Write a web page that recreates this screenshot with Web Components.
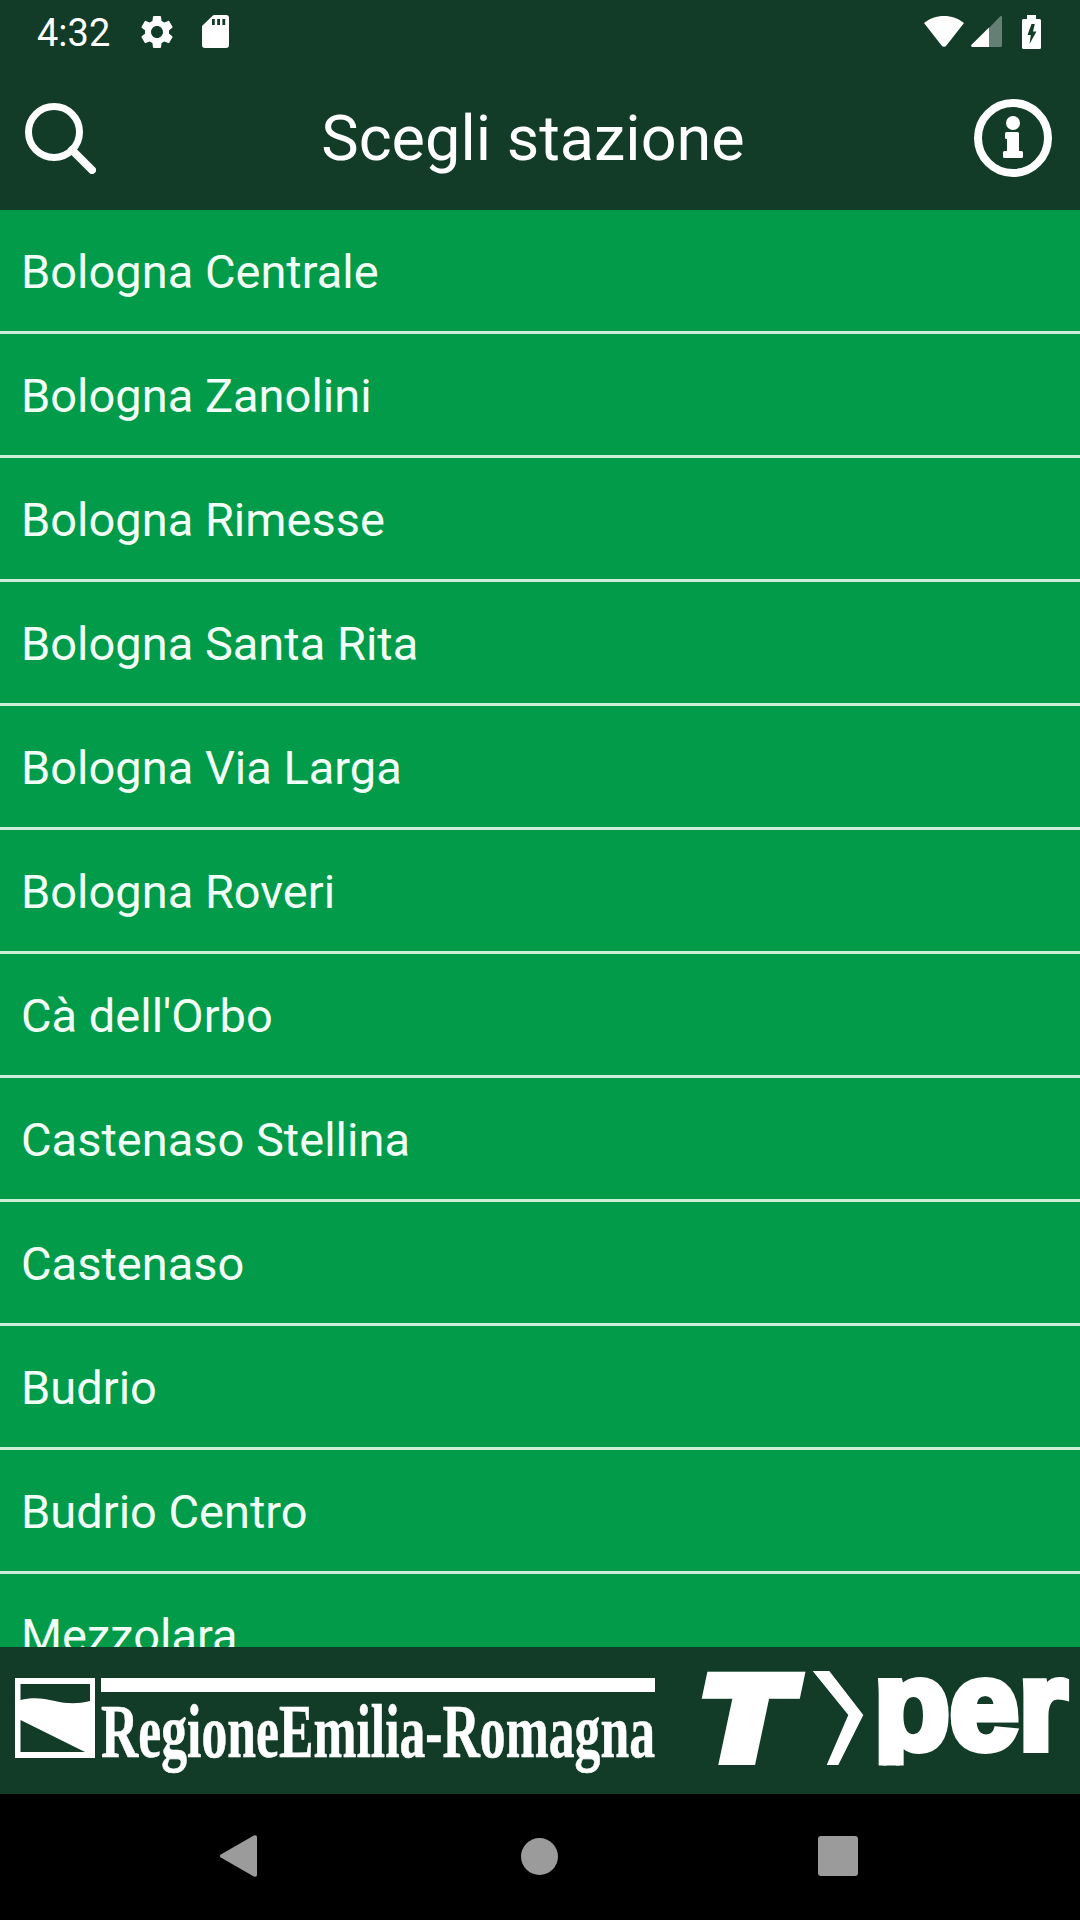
<!DOCTYPE html>
<html lang="it">
<head>
<meta charset="utf-8">
<title>Scegli stazione</title>
<style>
html,body{margin:0;padding:0;background:#000;}
body{font-family:Roboto,"Noto Sans",sans-serif;}
</style>
</head>
<body>
<app-shell>
  <status-bar slot="top"></status-bar>
  <app-toolbar slot="top" title="Scegli stazione"></app-toolbar>
  <station-list slot="main">
    <station-item>Bologna Centrale</station-item>
    <station-item>Bologna Zanolini</station-item>
    <station-item>Bologna Rimesse</station-item>
    <station-item>Bologna Santa Rita</station-item>
    <station-item>Bologna Via Larga</station-item>
    <station-item>Bologna Roveri</station-item>
    <station-item>Cà dell'Orbo</station-item>
    <station-item>Castenaso Stellina</station-item>
    <station-item>Castenaso</station-item>
    <station-item>Budrio</station-item>
    <station-item>Budrio Centro</station-item>
    <station-item>Mezzolara</station-item>
  </station-list>
  <logo-footer slot="bottom"></logo-footer>
  <nav-bar slot="bottom"></nav-bar>
</app-shell>
<script>
function def(name, html, init){
  customElements.define(name, class extends HTMLElement{
    constructor(){super();this.attachShadow({mode:'open'}).innerHTML=html;}
    connectedCallback(){if(init)init(this);}
  });
}
def('app-shell',`<style>
:host{display:flex;flex-direction:column;width:1080px;height:1920px;overflow:hidden;}
.top{display:block;background:#123b28;flex:none;}
.main{display:block;flex:1;min-height:0;overflow:hidden;}
.bottom{display:block;flex:none;}
</style>
<div class="top"><slot name="top"></slot></div>
<div class="main"><slot name="main"></slot></div>
<div class="bottom"><slot name="bottom"></slot></div>`);

def('status-bar',`<style>
:host{display:flex;align-items:center;box-sizing:border-box;height:66px;padding:0 39px 3px 37px;color:#fff;}
.time{font:400 38px/44px Roboto,sans-serif;width:71px;margin-right:29px;position:relative;top:1px;white-space:nowrap;}
svg{display:block;flex:none;}
.sd{margin-left:25px;}
.wifi{margin-left:auto;}
.sig{margin-left:7px;}
.bat{margin-left:20px;}
</style>
<span class="time">4:32</span>
<svg width="40" height="40" viewBox="0 0 24 24" fill="#fff"><path d="M19.14 12.94c.04-.3.06-.61.06-.94 0-.32-.02-.64-.07-.94l2.03-1.58c.18-.14.23-.41.12-.61l-1.92-3.32c-.12-.22-.37-.29-.59-.22l-2.39.96c-.5-.38-1.03-.7-1.62-.94l-.36-2.54c-.04-.24-.24-.41-.48-.41h-3.84c-.24 0-.43.17-.47.41l-.36 2.54c-.59.24-1.13.57-1.62.94l-2.39-.96c-.22-.08-.47 0-.59.22L2.74 8.87c-.12.21-.08.47.12.61l2.03 1.58c-.05.3-.09.63-.09.94s.02.64.07.94l-2.03 1.58c-.18.14-.23.41-.12.61l1.92 3.32c.12.22.37.29.59.22l2.39-.96c.5.38 1.03.7 1.62.94l.36 2.54c.05.24.24.41.48.41h3.84c.24 0 .44-.17.47-.41l.36-2.54c.59-.24 1.13-.56 1.62-.94l2.39.96c.22.08.47 0 .59-.22l1.92-3.32c.12-.22.07-.47-.12-.61l-2.01-1.58zM12 15.6c-1.98 0-3.6-1.62-3.6-3.6s1.62-3.6 3.6-3.6 3.6 1.62 3.6 3.6-1.62 3.6-3.6 3.6z"/></svg>
<svg class="sd" width="27" height="33" viewBox="0 0 27 33"><path fill="#fff" fill-rule="evenodd" d="M12 0H24a3 3 0 0 1 3 3V30a3 3 0 0 1-3 3H3a3 3 0 0 1-3-3V11.5a1.5 1.5 0 0 1 .5-1.1L10.9.5A1.5 1.5 0 0 1 12 0ZM10 4h2.8v6H10ZM15.2 4h2.8v6h-2.8ZM20.4 4h2.8v6h-2.8Z"/></svg>
<svg class="wifi" width="40" height="31" viewBox="0 0 40 31"><path fill="#fff" d="M20 0C12.500 0 5.600 2.500 0 7L17.800 29.800a2.800 2.800 0 0 0 4.400 0L40 7C34.400 2.500 27.500 0 20 0Z"/></svg>
<svg class="sig" width="31" height="31" viewBox="0 0 31 31"><path fill="#fff" fill-opacity=".35" d="M31 1.500V29.500a1.500 1.500 0 0 1-1.500 1.500H18V12L29 .5C30 -.4 31 .2 31 1.500Z"/><path fill="#fff" d="M18 11.500V31H1.500C.2 31-.4 29.800 .5 28.800Z"/></svg>
<svg class="bat" width="19" height="34" viewBox="0 0 19 34"><path fill="#fff" fill-rule="evenodd" d="M5 0H14V4H17.500A1.500 1.500 0 0 1 19 5.500V32.500A1.500 1.500 0 0 1 17.500 34H1.500A1.500 1.500 0 0 1 0 32.500V5.500A1.500 1.500 0 0 1 1.500 4H5ZM9.500 9L5.500 20H8.800L7.500 29L14.500 16.500H11L12.800 9Z"/></svg>`);

def('app-toolbar',`<style>
:host{display:flex;align-items:center;box-sizing:border-box;height:144px;padding:0 28px 0 25px;color:#fff;}
svg{display:block;flex:none;}
.title{flex:1;text-align:center;font:400 63px/72px Roboto,sans-serif;padding:2px 4px 0 0;}
</style>
<svg width="71" height="71" viewBox="0 0 71 71" fill="none" stroke="#fff"><circle cx="29" cy="29" r="25.500" stroke-width="7"/><path d="M47 47 L67 67" stroke-width="8" stroke-linecap="round"/></svg>
<div class="title"></div>
<svg width="78" height="78" viewBox="0 0 78 78"><circle cx="39" cy="39" r="35" fill="none" stroke="#fff" stroke-width="8"/><circle cx="39" cy="24" r="7" fill="#fff"/><path fill="#fff" d="M31 34.500a1.500 1.500 0 0 1 1.500-1.500H43.500a1.500 1.500 0 0 1 1.500 1.500V52H47.500a1.500 1.500 0 0 1 1.500 1.500V57.500a1.500 1.500 0 0 1-1.500 1.500H30.500a1.500 1.500 0 0 1-1.500-1.500V53.500a1.500 1.500 0 0 1 1.500-1.500H33V40H32.500a1.500 1.500 0 0 1-1.500-1.500Z"/></svg>`,
el=>{el.shadowRoot.querySelector('.title').textContent=el.getAttribute('title');});

def('station-list',`<style>
:host{display:block;background:#019b4a;height:100%;overflow:hidden;}
</style><slot></slot>`);

def('station-item',`<style>
:host{display:flex;align-items:center;box-sizing:border-box;height:124px;padding:3px 0 0 21px;border-bottom:3px solid #cdeed6;color:#f2fff6;font:400 47px/56px Roboto,sans-serif;white-space:nowrap;}
</style><slot></slot>`);

def('logo-footer',`<style>
:host{display:block;height:147px;background:#123b28;}
svg{display:block;}
</style>
<svg width="1080" height="147" viewBox="0 1647 1080 147">
<defs><clipPath id="perclip"><rect x="860" y="1660" width="215" height="105.500"/></clipPath></defs>
<path fill="#fff" fill-rule="evenodd" d="M15 1678H95V1758H15ZM20.500 1684V1700C32 1697 43 1698 55 1701C67 1704 78 1704 90 1701V1684ZM20.500 1720V1752H85Z"/>
<rect x="101" y="1678" width="554" height="14" fill="#fff"/>
<text x="101" y="1757" font-family="'Liberation Serif',serif" font-weight="700" font-size="77" textLength="554" lengthAdjust="spacingAndGlyphs" fill="#fff" stroke="#fff" stroke-width=".6">RegioneEmilia-Romagna</text>
<text transform="translate(696 1758) skewX(-12) scale(1.2 1)" x="0" y="0" font-family="'Liberation Sans',sans-serif" font-weight="700" font-size="115" fill="#fff" stroke="#fff" stroke-width="14">T</text>
<polygon fill="#fff" points="812.700,1671 829.300,1671 863.300,1715 838.300,1765 826.700,1765 848.300,1715"/>
<g clip-path="url(#perclip)"><text x="874" y="1749" font-family="'Liberation Sans',sans-serif" font-weight="700" font-size="126" textLength="193" lengthAdjust="spacingAndGlyphs" fill="#fff" stroke="#fff" stroke-width="8">per</text></g>
</svg>`);

def('nav-bar',`<style>
:host{display:flex;align-items:center;box-sizing:border-box;height:126px;padding:0 0 2px 220px;background:#000;}
svg{display:block;flex:none;}
.c{margin-left:263.500px;}
.s{margin-left:260.500px;}
</style>
<svg width="37" height="42" viewBox="0 0 37 42"><path fill="#9b9b9b" d="M.8 19.400 33.800.6C35.400-.3 37 .4 37 2.200V39.800C37 41.600 35.400 42.300 33.800 41.400L.8 22.600C-.3 21.800-.3 20.200.8 19.400Z"/></svg>
<svg class="c" width="37" height="37" viewBox="0 0 37 37"><circle cx="18.500" cy="18.500" r="18.500" fill="#9b9b9b"/></svg>
<svg class="s" width="40" height="40" viewBox="0 0 40 40"><rect width="40" height="40" rx="3" fill="#9b9b9b"/></svg>`);
</script>
</body>
</html>
